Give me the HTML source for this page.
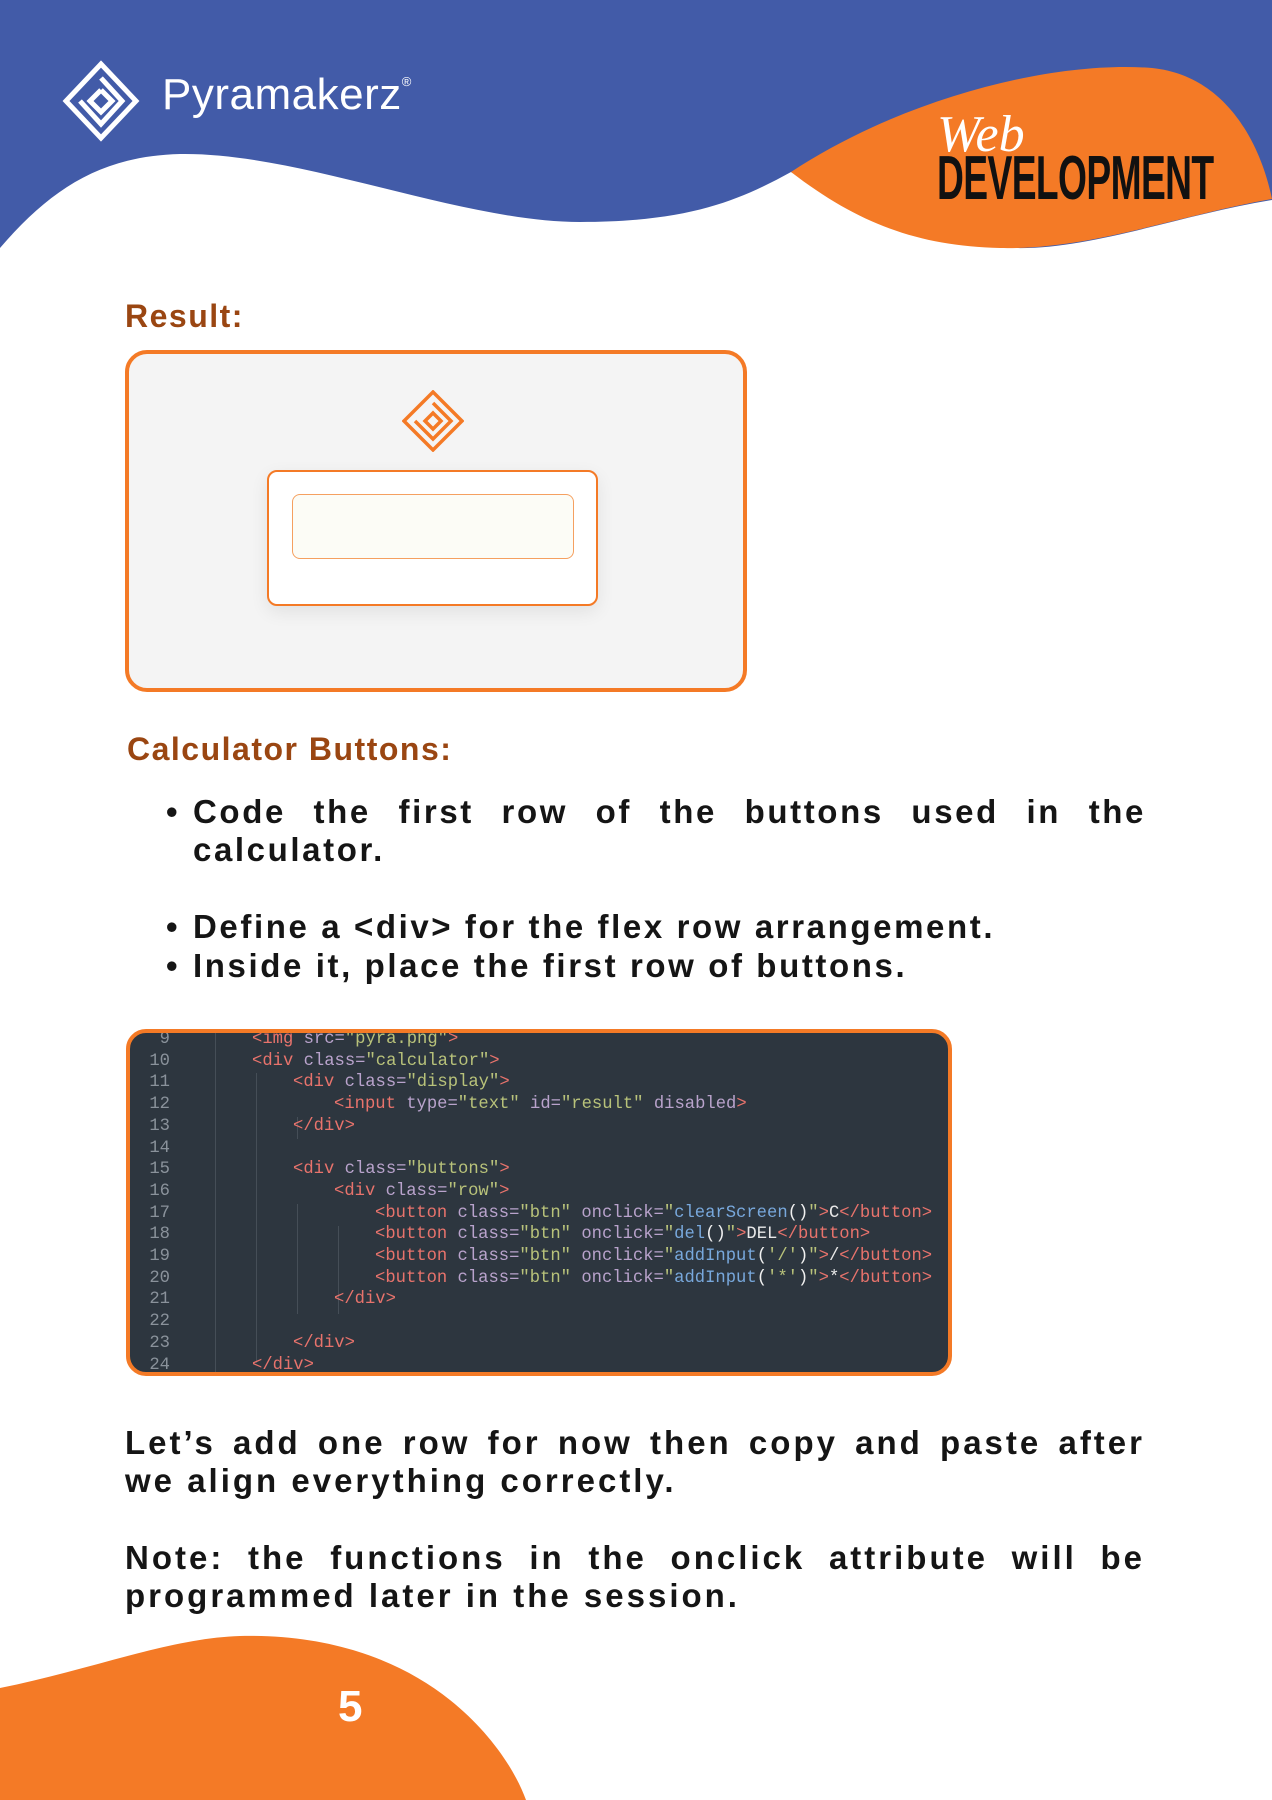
<!DOCTYPE html>
<html><head><meta charset="utf-8">
<style>
*{margin:0;padding:0;box-sizing:border-box}
body{width:1272px;height:1800px;position:relative;overflow:hidden;background:#fff;font-family:"Liberation Sans",sans-serif}
.abs{position:absolute}
h2{position:absolute;font-size:32px;font-weight:bold;color:#9a4612;letter-spacing:1.5px}
.txt{position:absolute;left:125px;width:1020px;font-size:33px;font-weight:bold;color:#151515;letter-spacing:3px;line-height:38px;text-align:justify;text-align-last:left}
.bl{position:absolute;left:166px;width:980px;font-size:33px;font-weight:bold;color:#151515;letter-spacing:2.6px;line-height:38px;padding-left:27px;text-align:justify;text-align-last:left}
.bl:before{content:"•";position:absolute;left:0;top:0}
.code{position:absolute;left:126px;top:1029px;width:826px;height:347px;background:#2d363f;border:4px solid #f47a26;border-radius:20px;overflow:hidden;font-family:"Liberation Mono",monospace;font-size:17.2px;color:#e8e8e8}
.ln{position:absolute;left:0;width:52px;text-align:right;color:#8a929b}
.cl{position:absolute;white-space:pre}
.t{color:#e8736c}.a{color:#b9a3cc}.s{color:#b8c27a}.f{color:#78a8dc}.w{color:#f0f0f0}
.guide{position:absolute;width:1px;background:#454e57}
</style></head><body>
<svg class="abs" style="left:0;top:0" width="1272" height="260" viewBox="0 0 1272 260">
<path d="M0 0H1272V200C1180 215 1090 250 1014 248C930 246 880 220 791 172C740 200 690 222 580 222C460 222 300 152 180 154C100 156 50 190 0 248Z" fill="#425ba8"/>
<path d="M791 172C900 100 1050 60 1152 68C1230 76 1262 150 1272 199C1180 215 1090 250 1000 248C920 246 860 225 791 172Z" fill="#f47a26"/>
<g fill="none" stroke="#fff" stroke-width="5">
<path d="M101 64L136 101L101 138L66 101Z"/>
<path d="M101 78L122 101L101 124L80 101"/>
<path d="M101 90L112 101L101 112L90 101L101 90"/>
</g>
</svg>
<div class="abs" style="left:162px;top:70px;font-size:44px;color:#fff;letter-spacing:0.5px">Pyramakerz<sup style="font-size:13px;vertical-align:top;position:relative;top:4px">®</sup></div>
<div class="abs" style="left:937px;top:148px;font-size:62px;font-weight:bold;color:#111;transform:scaleX(0.6);transform-origin:left top;letter-spacing:-1px;line-height:62px">DEVELOPMENT</div>
<div class="abs" style="left:937px;top:105px;font-size:52px;font-style:italic;color:#fff;font-family:'Liberation Serif',serif;line-height:60px">Web</div>

<h2 style="left:125px;top:298px">Result:</h2>
<div class="abs" style="left:125px;top:350px;width:622px;height:342px;background:#f4f4f4;border:4px solid #f47a26;border-radius:22px"></div>
<svg class="abs" style="left:402px;top:390px" width="62" height="62" viewBox="0 0 62 62"><g fill="none" stroke="#f47a26" stroke-width="3.5"><path d="M31 2L60 31L31 60L2 31Z"/><path d="M31 13L49 31L31 49L13 31"/><path d="M31 23L39 31L31 39L23 31Z"/></g></svg>
<div class="abs" style="left:267px;top:470px;width:331px;height:136px;background:#fff;border:2px solid #f47a26;border-radius:10px;box-shadow:0 6px 18px rgba(0,0,0,.08)"></div>
<div class="abs" style="left:292px;top:494px;width:282px;height:65px;background:#fcfcf6;border:1.5px solid #f5a060;border-radius:8px"></div>

<h2 style="left:127px;top:731px">Calculator Buttons:</h2>
<div class="bl" style="top:793px">Code the first row of the buttons used in the calculator.</div>
<div class="bl" style="top:908px">Define a &lt;div&gt; for the flex row arrangement.</div>
<div class="bl" style="top:947px">Inside it, place the first row of buttons.</div>

<div class="code">
<div class="guide" style="left:85px;top:0;height:347px"></div>
<div class="guide" style="left:126px;top:40px;height:290px"></div>
<div class="guide" style="left:167px;top:84px;height:22px"></div>
<div class="guide" style="left:167px;top:171px;height:110px"></div>
<div class="guide" style="left:208px;top:193px;height:88px"></div>
<div id="lines"></div>
</div>
<script>
var L=[
[9,0,'<span class="t">&lt;img</span> <span class="a">src=</span><span class="s">"pyra.png"</span><span class="t">&gt;</span>'],
[10,0,'<span class="t">&lt;div</span> <span class="a">class=</span><span class="s">"calculator"</span><span class="t">&gt;</span>'],
[11,1,'<span class="t">&lt;div</span> <span class="a">class=</span><span class="s">"display"</span><span class="t">&gt;</span>'],
[12,2,'<span class="t">&lt;input</span> <span class="a">type=</span><span class="s">"text"</span> <span class="a">id=</span><span class="s">"result"</span> <span class="a">disabled</span><span class="t">&gt;</span>'],
[13,1,'<span class="t">&lt;/div&gt;</span>'],
[14,0,''],
[15,1,'<span class="t">&lt;div</span> <span class="a">class=</span><span class="s">"buttons"</span><span class="t">&gt;</span>'],
[16,2,'<span class="t">&lt;div</span> <span class="a">class=</span><span class="s">"row"</span><span class="t">&gt;</span>'],
[17,3,'<span class="t">&lt;button</span> <span class="a">class=</span><span class="s">"btn"</span> <span class="a">onclick=</span><span class="s">"</span><span class="f">clearScreen</span><span class="w">()</span><span class="s">"</span><span class="t">&gt;</span>C<span class="t">&lt;/button&gt;</span>'],
[18,3,'<span class="t">&lt;button</span> <span class="a">class=</span><span class="s">"btn"</span> <span class="a">onclick=</span><span class="s">"</span><span class="f">del</span><span class="w">()</span><span class="s">"</span><span class="t">&gt;</span>DEL<span class="t">&lt;/button&gt;</span>'],
[19,3,'<span class="t">&lt;button</span> <span class="a">class=</span><span class="s">"btn"</span> <span class="a">onclick=</span><span class="s">"</span><span class="f">addInput</span><span class="w">(</span><span class="s">\'/\'</span><span class="w">)</span><span class="s">"</span><span class="t">&gt;</span>/<span class="t">&lt;/button&gt;</span>'],
[20,3,'<span class="t">&lt;button</span> <span class="a">class=</span><span class="s">"btn"</span> <span class="a">onclick=</span><span class="s">"</span><span class="f">addInput</span><span class="w">(</span><span class="s">\'*\'</span><span class="w">)</span><span class="s">"</span><span class="t">&gt;</span>*<span class="t">&lt;/button&gt;</span>'],
[21,2,'<span class="t">&lt;/div&gt;</span>'],
[22,0,''],
[23,1,'<span class="t">&lt;/div&gt;</span>'],
[24,0,'<span class="t">&lt;/div&gt;</span>']];
var h='';
for(var i=0;i<L.length;i++){var y=-3+i*21.7;
h+='<div class="ln" style="top:'+y+'px;width:40px">'+L[i][0]+'</div>';
h+='<div class="cl" style="top:'+y+'px;left:'+(122+L[i][1]*41)+'px">'+L[i][2]+'</div>';}
document.getElementById('lines').innerHTML=h;
</script>

<div class="txt" style="top:1424px">Let’s add one row for now then copy and paste after we align everything correctly.</div>
<div class="txt" style="top:1539px">Note: the functions in the onclick attribute will be programmed later in the session.</div>

<svg class="abs" style="left:0;top:1620px" width="1272" height="180" viewBox="0 0 1272 180">
<path d="M0 68C90 50 170 18 240 16C330 14 400 40 450 80C490 112 515 150 526 180H0Z" fill="#f47a26"/>
</svg>
<div class="abs" style="left:338px;top:1682px;font-size:44px;font-weight:bold;color:#fff">5</div>
</body></html>
